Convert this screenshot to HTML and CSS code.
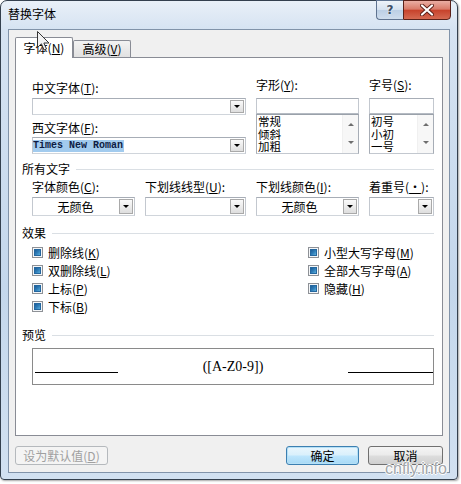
FILE: index.html
```html
<!DOCTYPE html>
<html lang="zh-CN">
<head>
<meta charset="utf-8">
<title>替换字体</title>
<link rel="stylesheet" href="styles.css">
</head>
<body>
<div class="window">
  <div class="titlebar">
    <span class="title">替换字体</span>
    <div class="caption-btns">
      <div class="cap-btn help">?</div>
      <div class="cap-btn close">
        <svg width="14" height="12" viewBox="0 0 14 12"><path d="M2 1.5 L12 10.5 M12 1.5 L2 10.5" stroke="#5a1e16" stroke-width="4" stroke-linecap="round"/><path d="M2 1.5 L12 10.5 M12 1.5 L2 10.5" stroke="#fff" stroke-width="2.2" stroke-linecap="round"/></svg>
      </div>
    </div>
  </div>
  <div class="client">
    <div class="tabs">
      <div class="tab active">字体(<u>N</u>)</div>
      <div class="tab">高级(<u>V</u>)</div>
    </div>
    <div class="panel">
      <div class="top">
        <div class="col-wide">
          <div class="lbl lbl-a">中文字体(<u>T</u>):</div>
          <div class="combo tall"><div class="field"></div><div class="drop"><i class="tri"></i></div></div>
          <div class="lbl lbl-b">西文字体(<u>F</u>):</div>
          <div class="combo tall combo-b"><div class="field"><span class="sel">Times New Roman</span></div><div class="drop"><i class="tri"></i></div></div>
        </div>
        <div class="col-list">
          <div class="lbl lbl-r">字形(<u>Y</u>):</div>
          <div class="textbox"></div>
          <div class="listbox">
            <div class="items"><div>常规</div><div>倾斜</div><div>加粗</div></div>
            <div class="vscroll"><i class="up"></i><i class="down"></i></div>
          </div>
        </div>
        <div class="col-list">
          <div class="lbl lbl-r">字号(<u>S</u>):</div>
          <div class="textbox"></div>
          <div class="listbox">
            <div class="items"><div>初号</div><div>小初</div><div>一号</div></div>
            <div class="vscroll"><i class="up"></i><i class="down"></i></div>
          </div>
        </div>
      </div>

      <div class="group-h gh-1">所有文字</div>
      <div class="grid4">
        <div class="lbl">字体颜色(<u>C</u>):</div>
        <div class="lbl">下划线线型(<u>U</u>):</div>
        <div class="lbl">下划线颜色(<u>I</u>):</div>
        <div class="lbl">着重号(<u>·</u>):</div>
        <div class="combo mid"><div class="field center">无颜色</div><div class="drop"><i class="tri"></i></div></div>
        <div class="combo mid"><div class="field"></div><div class="drop"><i class="tri"></i></div></div>
        <div class="combo mid"><div class="field center">无颜色</div><div class="drop"><i class="tri"></i></div></div>
        <div class="combo mid"><div class="field"></div><div class="drop"><i class="tri"></i></div></div>
      </div>

      <div class="group-h gh-2">效果</div>
      <div class="effects">
        <div class="eff-col">
          <div class="chk"><span class="box"><span class="fill"></span></span>删除线(<u>K</u>)</div>
          <div class="chk"><span class="box"><span class="fill"></span></span>双删除线(<u>L</u>)</div>
          <div class="chk"><span class="box"><span class="fill"></span></span>上标(<u>P</u>)</div>
          <div class="chk"><span class="box"><span class="fill"></span></span>下标(<u>B</u>)</div>
        </div>
        <div class="eff-col">
          <div class="chk"><span class="box"><span class="fill"></span></span>小型大写字母(<u>M</u>)</div>
          <div class="chk"><span class="box"><span class="fill"></span></span>全部大写字母(<u>A</u>)</div>
          <div class="chk"><span class="box"><span class="fill"></span></span>隐藏(<u>H</u>)</div>
        </div>
      </div>

      <div class="group-h gh-3">预览</div>
      <div class="preview">
        <span class="pline pl-left"></span>
        <span class="ptext">([A-Z0-9])</span>
        <span class="pline pl-right"></span>
      </div>
    </div>
    <div class="buttons">
      <div class="btn disabled">设为默认值(<u>D</u>)</div>
      <div class="btn default">确定</div>
      <div class="btn cancel">取消</div>
    </div>
  </div>
</div>
<div class="watermark">cnfly.info</div>
<svg class="cursor" width="14" height="21" viewBox="0 0 14 21"><path d="M0.5 0.5 L0.5 16.5 L4.4 12.8 L7.1 19 L9.5 18 L6.9 12 L12 12 Z" fill="#f2f2f2" stroke="#333" stroke-width="1" stroke-linejoin="round"/></svg>
</body>
</html>
```

FILE: styles.css
```css
html, body {
  margin: 0;
  padding: 0;
}

body {
  width: 461px;
  height: 484px;
  overflow: hidden;
  position: relative;
  background: #ffffff;
  font-family: "Noto Sans CJK SC", "Noto Sans", sans-serif;
  font-size: 12px;
  color: #000;
}

u {
  text-decoration: underline;
  text-underline-offset: 1px;
}

.window {
  box-sizing: border-box;
  width: 458px;
  height: 480px;
  border: 1px solid #34404e;
  border-radius: 7px 7px 4px 4px;
  background: linear-gradient(180deg, #e9f0f8 0px, #d6e3f2 28px, #c4d7ec 60%, #d2e1f1 100%);
  padding: 0 7px 6px 7px;
  display: flex;
  flex-direction: column;
  box-shadow: 1px 1px 2px rgba(0,0,0,0.35);
}

.titlebar {
  height: 28px;
  display: flex;
  align-items: flex-start;
  flex: none;
}

.title {
  margin-top: 5px;
  line-height: 16px;
  font-size: 12px;
  color: #000;
}

.caption-btns {
  margin-left: auto;
  margin-right: -1px;
  margin-top: -1px;
  display: flex;
}

.cap-btn {
  box-sizing: border-box;
  height: 20px;
  display: flex;
  align-items: center;
  justify-content: center;
}

.help {
  width: 27px;
  border: 1px solid #5f7390;
  border-right: none;
  border-radius: 0 0 0 4px;
  background: linear-gradient(180deg, #eef3f9 0%, #d5e1ef 48%, #bccfe5 52%, #cfdded 100%);
  color: #3d4f66;
  font-family: "DejaVu Sans", sans-serif;
  font-weight: bold;
  font-size: 12px;
  text-shadow: 0 0 2px #fff;
}

.close {
  width: 48px;
  border: 1px solid #5b2119;
  border-radius: 0 0 4px 0;
  background: linear-gradient(180deg, #eaaea3 0%, #d97b69 45%, #c7432c 52%, #d56a52 100%);
}

.client {
  flex: 1;
  background: #f0f0f0;
  border: 1px solid #8193a9;
  padding: 7px 6px 0 6px;
  display: flex;
  flex-direction: column;
}

.tabs {
  display: flex;
  align-items: flex-end;
  height: 21px;
  margin-bottom: -1px;
  position: relative;
  z-index: 1;
}

.tab {
  box-sizing: border-box;
  width: 58px;
  height: 17px;
  margin-bottom: 1px;
  border: 1px solid #898c95;
  border-bottom: none;
  border-radius: 2px 2px 0 0;
  background: linear-gradient(180deg, #f3f3f3, #e1e1e1);
  text-align: center;
  line-height: 16px;
}

.tab.active {
  height: 21px;
  margin-bottom: 0;
  background: #fff;
  line-height: 19px;
}

.panel {
  box-sizing: border-box;
  height: 379px;
  border: 1px solid #898c95;
  background: #fff;
  padding: 0 8px 0 16px;
  flex: none;
}

.lbl {
  line-height: 14px;
  white-space: nowrap;
}

.top {
  display: grid;
  grid-template-columns: 214px 103px 65px;
  column-gap: 10px;
}

.lbl-a { margin-top: 23px; }
.lbl-b { margin-top: 6px; }
.lbl-r { margin-top: 20px; }

.combo {
  box-sizing: border-box;
  display: flex;
  background: #fff;
  border: 1px solid #a7adb6;
  border-left-color: #c3c8cf;
  border-right-color: #c3c8cf;
  border-bottom-color: #d0d5db;
}

.combo.tall {
  height: 17px;
  margin-top: 3px;
}

.combo-b {
  margin-top: 2px !important;
}

.combo.mid {
  height: 19px;
  margin-top: 3px;
}

.field {
  flex: 1;
  display: flex;
  align-items: center;
  overflow: hidden;
  white-space: nowrap;
}

.field.center {
  justify-content: center;
  line-height: 14px;
}

.sel {
  background: #a2cbee;
  color: #0e1c44;
  font-family: "Liberation Mono", monospace;
  font-weight: bold;
  font-size: 10px;
  line-height: 12px;
  padding: 0 1px 0 0;
}

.drop {
  box-sizing: border-box;
  width: 14px;
  margin: 1px;
  border: 1px solid #a9a9a9;
  background: linear-gradient(180deg, #fafafa, #dedede);
  display: flex;
  align-items: center;
  justify-content: center;
}

.tri {
  width: 0;
  height: 0;
  border-left: 3px solid transparent;
  border-right: 3px solid transparent;
  border-top: 3px solid #000;
}

.textbox {
  box-sizing: border-box;
  height: 16px;
  margin-top: 6px;
  background: #fff;
  border: 1px solid #a7adb6;
  border-left-color: #c3c8cf;
  border-right-color: #c3c8cf;
  border-bottom-color: #b5bbc3;
}

.listbox {
  box-sizing: border-box;
  height: 40px;
  display: flex;
  border: 1px solid #a7adb6;
  border-top-color: #9aa1aa;
  border-bottom-color: #c3c8cf;
  background: #fff;
  overflow: hidden;
}

.items {
  flex: 1;
  padding-left: 1px;
  line-height: 12.5px;
  font-size: 11.5px;
}

.vscroll {
  width: 16px;
  background: #f7f7f7;
  border-left: 1px solid #f0f0f0;
  display: flex;
  flex-direction: column;
  align-items: center;
  justify-content: space-between;
  padding: 8px 0 9px;
  box-sizing: border-box;
}

.vscroll .up {
  width: 0;
  height: 0;
  border-left: 3px solid transparent;
  border-right: 3px solid transparent;
  border-bottom: 3px solid #6e6e6e;
}

.vscroll .down {
  width: 0;
  height: 0;
  border-left: 3px solid transparent;
  border-right: 3px solid transparent;
  border-top: 3px solid #6e6e6e;
}

.group-h {
  display: flex;
  align-items: center;
  margin-left: -10px;
  line-height: 14px;
}

.group-h::after {
  content: "";
  flex: 1;
  height: 1px;
  background: #dadfe4;
  margin-left: 6px;
}

.gh-1 { margin-top: 8px; }
.gh-2 { margin-top: 10px; }
.gh-3 { margin-top: 13px; }

.grid4 {
  display: grid;
  grid-template-columns: 103px 101px 103px 65px;
  column-gap: 10px;
  margin-top: 4px;
}

.effects {
  display: grid;
  grid-template-columns: 276px auto;
  margin-top: 3px;
}

.chk {
  height: 18px;
  display: flex;
  align-items: center;
  white-space: nowrap;
}

.box {
  box-sizing: border-box;
  width: 11px;
  height: 11px;
  border: 1px solid #8e9196;
  background: #f4f6f8;
  padding: 1px;
  margin-right: 5px;
  display: flex;
}

.fill {
  flex: 1;
  background: linear-gradient(135deg, #1c5d98 0%, #2f7db8 50%, #5aaedb 100%);
  border: 1px solid #24679f;
}

.preview {
  box-sizing: border-box;
  height: 37px;
  margin-top: 6px;
  border: 1px solid #8a8a8a;
  display: flex;
  align-items: flex-start;
}

.pline {
  height: 1px;
  background: #000;
  margin-top: 23px;
}

.pl-left {
  width: 83px;
  margin-left: 2px;
}

.pl-right {
  width: 85px;
}

.ptext {
  flex: 1;
  text-align: center;
  font-family: "Liberation Serif", serif;
  font-size: 14px;
  line-height: 16px;
  margin-top: 10px;
  color: #000;
}

.buttons {
  display: flex;
  margin-top: 10px;
  height: 19px;
}

.btn {
  box-sizing: border-box;
  height: 19px;
  border: 1px solid #707070;
  border-radius: 3px;
  background: linear-gradient(180deg, #f4f4f4 0%, #ebebeb 48%, #dddddd 52%, #cfcfcf 100%);
  display: flex;
  align-items: center;
  justify-content: center;
  line-height: 14px;
  white-space: nowrap;
}

.btn.disabled {
  width: 93px;
  border-color: #b5b9bd;
  background: #f4f4f4;
  color: #a0a0a0;
}

.btn.default {
  width: 73px;
  margin-left: auto;
  border-color: #3c7fb1;
  box-shadow: inset 0 0 0 1px #b5e0f6;
  background: linear-gradient(180deg, #eaf6fd 0%, #d9f0fc 48%, #bee6fd 52%, #a7d9f5 100%);
}

.btn.cancel {
  width: 75px;
  margin-left: 9px;
}

.watermark {
  position: absolute;
  z-index: 5;
  left: 385px;
  top: 459px;
  font-family: "Liberation Sans", sans-serif;
  font-size: 16px;
  line-height: 20px;
  color: #a2a6aa;
  text-shadow: 1px 0 0 #fff, -1px 0 0 #fff, 0 1px 0 #fff, 0 -1px 0 #fff;
}

.cursor {
  position: absolute;
  z-index: 10;
  left: 37px;
  top: 31px;
}
```
